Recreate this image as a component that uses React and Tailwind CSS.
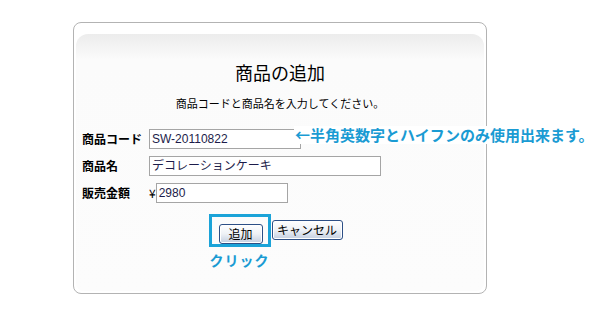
import React from "react";

const jp = { fontFamily: '"Noto Sans CJK JP", "Liberation Sans", sans-serif' };
const inputFont = { fontFamily: '"Liberation Sans", "Noto Sans CJK JP", sans-serif' };

function Btn({ children, className = "" }) {
  return (
    <button
      className={
        "h-[20px] px-0 whitespace-nowrap text-[12px] leading-none text-black border border-[#2d4f86] rounded-[3px] bg-gradient-to-b from-[#ffffff] via-[#eef1f6] to-[#c3cee0] shadow-[inset_0_0_0_1px_#ffffff] " +
        className
      }
      style={jp}
    >
      {children}
    </button>
  );
}

function Field({ label, children }) {
  return (
    <div className="flex items-center h-[27px]">
      <div className="w-[67px] text-[12px] font-bold text-black" style={jp}>
        {label}
      </div>
      {children}
    </div>
  );
}

export default function App() {
  return (
    <div className="w-[590px] h-[323px] bg-white pt-[22px] pl-[73px]" style={jp}>
      <div className="relative w-[414px] h-[272px] border border-[#b3b3b3] rounded-[8px] bg-white px-[2px] pt-[11px] pb-[2px]">
        <div className="h-full rounded-t-[12px] rounded-b-[8px] bg-gradient-to-b from-[#ececec] via-[#fbfbfb] via-[10%] to-[#fcfcfc]">
          <h1 className="pt-[27px] text-center text-[18px] leading-[22px] text-black">商品の追加</h1>
          <p className="mt-[13px] text-center text-[11px] leading-[14px] text-black">
            商品コードと商品名を入力してください。
          </p>

          <div className="mt-[15px] ml-[6px] relative">
            <Field label="商品コード">
              <div className="w-[152px] h-[20px] border border-[#a5a5a5] bg-white pl-[2px] text-[12px] leading-[18px] text-[#1c1c4a]" style={inputFont}>
                SW-20110822
              </div>
            </Field>
            <Field label="商品名">
              <div className="w-[232px] h-[20px] border border-[#a5a5a5] bg-white pl-[2px] text-[12px] leading-[18px] text-[#1c1c4a]" style={inputFont}>
                デコレーションケーキ
              </div>
            </Field>
            <Field label="販売金額">
              <span className="text-[12px] text-black">¥</span>
              <div className="w-[132px] h-[20px] border border-[#a5a5a5] bg-white pl-[2px] text-[12px] leading-[18px] text-[#1c1c4a]" style={inputFont}>
                2980
              </div>
            </Field>

            <div className="absolute z-10 left-[212px] top-[1px] bg-white px-[1px] text-[15px] font-bold leading-[18px] text-[#1a9bd3] whitespace-nowrap">
              ←半角英数字とハイフンのみ使用出来ます。
            </div>
          </div>

          <div className="mt-[14px] flex justify-center gap-[9px] pl-[1px]">
            <div className="relative">
              <Btn className="w-[44px]">追加</Btn>
              <div className="absolute -left-[10px] -top-[6px] w-[62px] h-[33px] border-[3px] border-[#1ba3d8]"></div>
              <div className="absolute -left-[9px] top-[30px] text-[14px] font-bold text-[#1a9bd3] whitespace-nowrap tracking-[1px]">
                クリック
              </div>
            </div>
            <Btn className="w-[71px]">キャンセル</Btn>
          </div>
        </div>
      </div>
    </div>
  );
}
